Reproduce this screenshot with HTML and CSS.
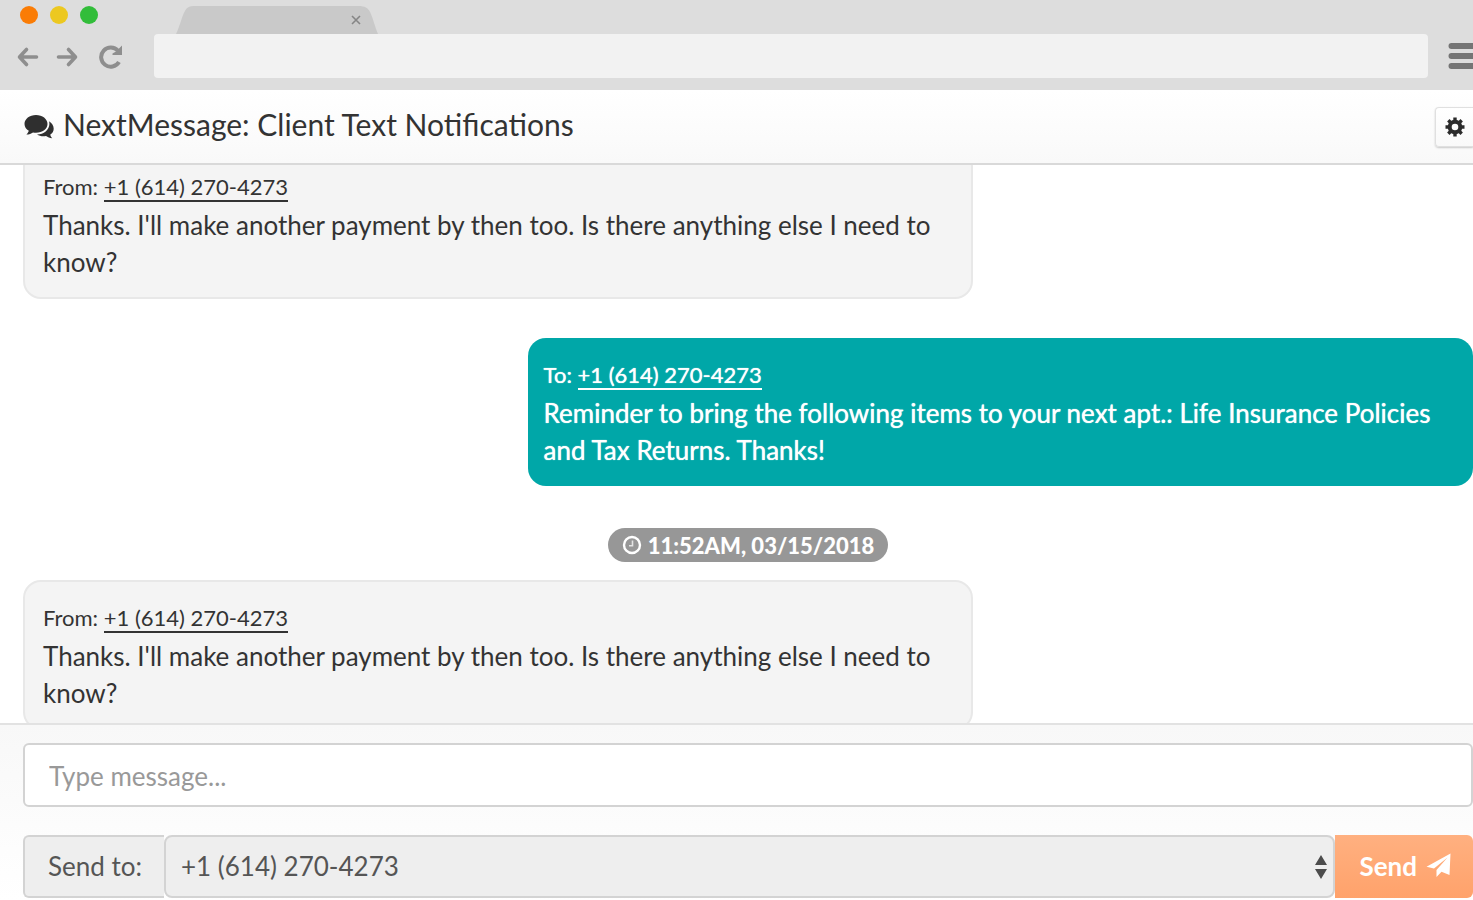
FILE: index.html
```html
<!DOCTYPE html>
<html lang="en">
<head>
  <meta charset="UTF-8">
  <meta name="viewport" content="width=device-width, initial-scale=1.0">
  <title>NextMessage: Client Text Notifications</title>
  <link rel="stylesheet" href="styles.css">
</head>
<body>

  <!-- Browser bar -->
  <div class="browser">
    <div class="tab-row">
      <div class="lights">
        <span class="light orange"></span>
        <span class="light yellow"></span>
        <span class="light green"></span>
      </div>
      <div class="tab">
        <svg class="tab-shape" viewBox="0 0 204 28" preserveAspectRatio="none" aria-hidden="true">
          <path d="M0 28C4 20 6 10 9 5C11 1 14 0 19 0H183C190 0 193 2 195 6C198 12 200 21 203 28Z" fill="#c9c9c9"/>
        </svg>
        <button class="tab-close" type="button" aria-label="Close tab">
          <svg width="10" height="10" viewBox="0 0 10 10"><path d="M1 1L9 9M9 1L1 9" stroke="#858585" stroke-width="1.6"/></svg>
        </button>
      </div>
    </div>
    <div class="address-row">
      <div class="nav-buttons">
        <button type="button" aria-label="Back">
          <svg width="22" height="22" viewBox="0 0 22 22" fill="none" stroke="#8e8e8e" stroke-width="3.6" stroke-linecap="round" stroke-linejoin="round"><path d="M19.5 11H3M9.5 3.5L2.5 11L9.5 18.5"/></svg>
        </button>
        <button type="button" aria-label="Forward">
          <svg width="22" height="22" viewBox="0 0 22 22" fill="none" stroke="#8e8e8e" stroke-width="3.6" stroke-linecap="round" stroke-linejoin="round"><path d="M2.5 11H19M12.5 3.5L19.5 11L12.5 18.5"/></svg>
        </button>
        <button type="button" aria-label="Reload">
          <svg width="24" height="24" viewBox="0 0 24 24"><path d="M20 17A9.6 9.6 0 1 1 19 5.8" fill="none" stroke="#8e8e8e" stroke-width="4"/><path d="M23 .5V10H13.5V8.5L17 6.5Z" fill="#8e8e8e"/></svg>
        </button>
      </div>
      <input class="address" type="text" aria-label="Address">
      <button class="menu" type="button" aria-label="Menu">
        <svg width="25" height="28" viewBox="0 0 25 28" stroke="#757575" stroke-width="6" stroke-linecap="round"><path d="M3.5 4H30M3.5 14H30M3.5 24H30"/></svg>
      </button>
    </div>
  </div>

  <!-- Header -->
  <header>
    <svg class="comments" width="30" height="25" viewBox="0 0 30 25" fill="#2f2f2f" aria-hidden="true">
      <path d="M12 1C5.6 1 .5 4.9 .5 9.9C.5 12.7 2.2 15.2 4.8 16.8C4.4 18.3 3.5 19.5 2.4 20.6C5.1 20.3 7.3 19.5 9 18.4C10 18.6 11 18.7 12 18.7C18.4 18.7 23.5 14.8 23.5 9.9S18.4 1 12 1Z"/>
      <path d="M25 7.2C25.3 8.1 25.4 9 25.4 9.9C25.4 15.7 19.8 20.3 13 20.5C14.8 21.7 17.1 22.3 19.3 22.3C20.2 22.3 21.1 22.2 22 22.1C23.7 23.3 25.8 24 28.2 24.3C27.3 23.3 26.6 22 26.2 20.7C28.4 19.3 29.7 17.2 29.7 14.7C29.7 11.6 27.9 8.8 25 7.2Z"/>
    </svg>
    <h1>NextMessage: Client Text Notifications</h1>
    <button class="settings" type="button" aria-label="Settings">
      <svg width="20" height="20" viewBox="0 0 20 20"><circle cx="10" cy="10" r="5.3" fill="none" stroke="#2b2b2b" stroke-width="4"/><path d="M10 .5V4M10 16V19.5M.5 10H4M16 10H19.5M3.3 3.3L5.5 5.5M14.5 14.5L16.7 16.7M16.7 3.3L14.5 5.5M5.5 14.5L3.3 16.7" stroke="#2b2b2b" stroke-width="3.4"/></svg>
    </button>
  </header>

  <!-- Conversation -->
  <main class="chat">
    <div class="messages">
      <article class="message received">
        <p class="meta">From: <a href="tel:+16142704273">+1 (614) 270-4273</a></p>
        <p class="text">Thanks. I'll make another payment by then too. Is there anything else I need to know?</p>
      </article>

      <article class="message sent">
        <p class="meta">To: <a href="tel:+16142704273">+1 (614) 270-4273</a></p>
        <p class="text">Reminder to bring the following items to your next apt.: Life Insurance Policies and Tax Returns. Thanks!</p>
      </article>

      <div class="timestamp">
        <svg width="20" height="20" viewBox="0 0 20 20" fill="none" stroke="#fff" aria-hidden="true"><circle cx="10" cy="10" r="8" stroke-width="2.4"/><path d="M10.5 5.5V10.8H7" stroke-width="1.6" stroke="#e4e4e4"/></svg>
        <time datetime="2018-03-15T11:52">11:52AM, 03/15/2018</time>
      </div>

      <article class="message received">
        <p class="meta">From: <a href="tel:+16142704273">+1 (614) 270-4273</a></p>
        <p class="text">Thanks. I'll make another payment by then too. Is there anything else I need to know?</p>
      </article>
    </div>
  </main>

  <!-- Composer -->
  <form class="composer">
    <input class="message-input" type="text" placeholder="Type message..." aria-label="Message">
    <div class="send-row">
      <label for="recipient">Send to:</label>
      <div class="select-wrap">
        <select id="recipient" name="recipient">
          <option>+1 (614) 270-4273</option>
        </select>
        <svg class="select-arrows" width="12" height="24" viewBox="0 0 12 24" fill="#4c4c4c" aria-hidden="true"><path d="M6 0L12 10H0ZM6 24L12 14H0Z"/></svg>
      </div>
      <button class="send" type="button">
        Send
        <svg width="25" height="25" viewBox="0 0 25 25" fill="#fff" aria-hidden="true"><path d="M24.5 .5L23.5 22L15.5 18.8L10.5 24V17L21.5 4.5L8 15.5L.5 13.8Z"/></svg>
      </button>
    </div>
  </form>

</body>
</html>
```
FILE: styles.css
```css
/* General Reset */
* {
  margin: 0;
  padding: 0;
  box-sizing: border-box;
}

body {
  font-family: Lato, sans-serif;
  font-size: 26px;
  color: #333;
  background: #fff;
  height: 100vh;
  display: flex;
  flex-direction: column;
  overflow: hidden;
}

button, input, select {
  font: inherit;
  color: inherit;
  border: none;
  background: none;
}

button {
  cursor: pointer;
}

svg {
  display: block;
  flex: none;
}

/* Browser bar */
.browser {
  flex: none;
  background: #ddd;
  padding-bottom: 12px;
}

.tab-row {
  display: flex;
  height: 34px;
}

.lights {
  display: flex;
  gap: 12px;
  padding: 6px 0 0 20px;
  width: 176px;
}

.light {
  width: 18px;
  height: 18px;
  border-radius: 50%;
}

.orange {
  background: #fa7c05;
}

.yellow {
  background: #ecc820;
}

.green {
  background: #32bd3a;
}

.tab {
  position: relative;
  width: 203px;
  margin-top: 6px;
}

.tab-shape {
  width: 100%;
  height: 100%;
}

.tab-close {
  position: absolute;
  top: 9px;
  right: 18px;
}

.address-row {
  display: flex;
  align-items: center;
  height: 44px;
}

.nav-buttons {
  display: flex;
  align-items: center;
  gap: 17px;
  width: 154px;
  padding: 2px 0 0 17px;
}

.nav-buttons button:last-child {
  margin-left: 4px;
}

.address {
  flex: 1;
  height: 44px;
  min-width: 0;
  padding: 0 16px;
  background: #f2f2f2;
  border-radius: 4px;
}

.menu {
  margin-left: 20px;
}

/* Header */
header {
  flex: none;
  display: flex;
  align-items: center;
  height: 75px;
  padding-left: 24px;
  background: linear-gradient(#fff, #f9f9f9);
  border-bottom: 2px solid #d9d9d9;
}

header h1 {
  flex: 1;
  padding: 0 0 6px 9px;
  font-size: 30px;
  font-weight: 400;
  line-height: 36px;
}

.settings {
  display: flex;
  align-items: center;
  height: 40px;
  padding: 0 8px 0 9px;
  border: 1px solid #e0e0e0;
  border-right: none;
  border-radius: 4px 0 0 4px;
  background: linear-gradient(#fff, #f9f9f9);
  box-shadow: 0 1px 2px rgba(0, 0, 0, 0.2);
}

/* Conversation */
.chat {
  flex: 1;
  min-height: 0;
  overflow: hidden;
}

/* list rests slightly scrolled under the header */
.messages {
  display: flex;
  flex-direction: column;
  margin-top: -16px;
  padding-left: 23px;
}

.message {
  border-radius: 18px;
}

.received {
  align-self: flex-start;
  width: 65.5%;
  padding: 16px 18px;
  background: #f4f4f4;
  border: 2px solid #e8e8e8;
}

.sent {
  align-self: flex-end;
  width: 65.2%;
  margin: 39px 0 42px;
  padding: 17px 16px;
  background: #00a7a8;
  color: #fff;
  text-shadow: 0 0 1px #fff;
}

.meta {
  font-size: 22px;
  line-height: 40px;
}

.meta a {
  color: inherit;
  text-decoration: none;
  border-bottom: 2px solid currentColor;
}

.text {
  line-height: 37px;
}

.timestamp {
  align-self: center;
  display: flex;
  align-items: center;
  gap: 6px;
  height: 34px;
  margin-bottom: 18px;
  padding: 0 14px;
  border-radius: 17px;
  background: #979797;
  color: #fff;
  font-size: 22px;
  font-weight: 900;
}

/* Composer */
.composer {
  flex: none;
  padding: 18px 0 2px 23px;
  background: linear-gradient(#f8f8f8, #fff);
  border-top: 2px solid #e2e2e2;
}

.message-input {
  display: block;
  width: 100%;
  height: 64px;
  padding: 2px 24px 0;
  border: 2px solid #d3d3d3;
  border-radius: 6px;
  background: #fff;
}

.message-input::placeholder {
  color: #999;
  opacity: 1;
}

.send-row {
  display: flex;
  height: 63px;
  margin-top: 28px;
}

.send-row label {
  display: flex;
  align-items: center;
  padding: 0 22px 2px 23px;
  background: #eee;
  border: 2px solid #d3d3d3;
  border-right: none;
  border-radius: 6px 0 0 6px;
  color: #555;
}

.select-wrap {
  position: relative;
  flex: 1;
}

.select-wrap select {
  appearance: none;
  width: 100%;
  height: 100%;
  padding: 0 40px 2px 15px;
  background: #eee;
  border: 2px solid #d3d3d3;
  border-radius: 8px;
  color: #555;
}

.select-arrows {
  position: absolute;
  top: 20px;
  right: 8px;
  pointer-events: none;
}

.send {
  display: flex;
  align-items: center;
  gap: 9px;
  padding: 0 22px 2px 24px;
  background: linear-gradient(#ffb080, #ffa26b);
  border-radius: 0 6px 6px 0;
  color: #fff;
  font-weight: 700;
}
```
